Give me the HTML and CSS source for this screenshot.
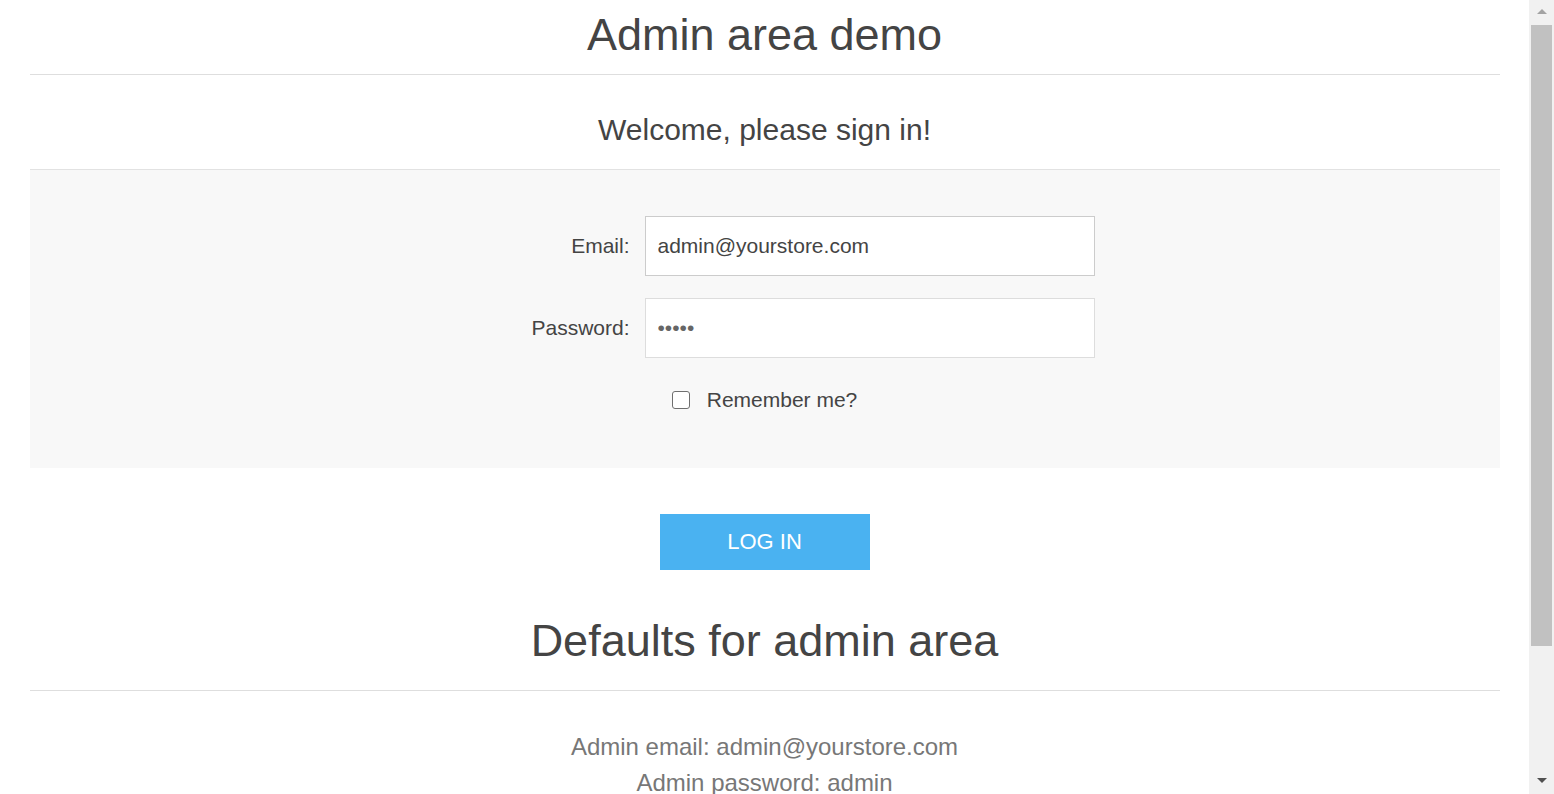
FILE: index.html
```html
<!DOCTYPE html>
<html lang="en">
<head>
<meta charset="utf-8">
<title>Admin area demo</title>
<link rel="stylesheet" href="styles.css">
</head>
<body>
<div class="window">
  <main class="page">
    <div class="container">
      <h1 class="page-title">Admin area demo</h1>
      <h2 class="welcome">Welcome, please sign in!</h2>
      <form class="login-form">
        <div class="form-panel">
          <div class="form-row">
            <label class="form-label" for="email">Email:</label>
            <input class="form-input form-input--active" id="email" type="text" value="admin@yourstore.com" autofocus>
          </div>
          <div class="form-row">
            <label class="form-label" for="password">Password:</label>
            <input class="form-input form-input--password" id="password" type="password" value="admin">
          </div>
          <div class="remember-row">
            <input class="checkbox" id="remember" type="checkbox">
            <label class="remember-label" for="remember">Remember me?</label>
          </div>
        </div>
        <div class="button-row">
          <button class="login-button" type="button">LOG IN</button>
        </div>
      </form>
      <h1 class="defaults-title">Defaults for admin area</h1>
      <div class="defaults-text">
        <p>Admin email: admin@yourstore.com</p>
        <p>Admin password: admin</p>
      </div>
    </div>
  </main>
  <div class="scrollbar" aria-hidden="true">
    <div class="scroll-btn scroll-btn--up"><span class="arrow-up"></span></div>
    <div class="scroll-thumb"></div>
    <div class="scroll-rest"></div>
    <div class="scroll-btn scroll-btn--down"><span class="arrow-down"></span></div>
  </div>
</div>
</body>
</html>
```

FILE: styles.css
```css
html, body {
  margin: 0;
  padding: 0;
  height: 100%;
  overflow: hidden;
  background: #fff;
}

body {
  font-family: "Liberation Sans", Arial, sans-serif;
  color: #444;
}

.window {
  display: flex;
  height: 794px;
}

.page {
  flex: 1;
  overflow: hidden;
}

.container {
  width: 1470px;
  margin: 0 auto;
  text-align: center;
}

.page-title {
  margin: 0;
  padding: 5px 0 9px;
  font-size: 45px;
  line-height: 60px;
  font-weight: normal;
  border-bottom: 1px solid #dedede;
}

.welcome {
  margin: 0;
  padding: 35px 0 19px;
  font-size: 30px;
  line-height: 40px;
  font-weight: normal;
  border-bottom: 1px solid #e2e2e2;
}

.form-panel {
  background: #f8f8f8;
  padding: 46px 0 56px;
  display: flex;
  flex-direction: column;
  align-items: center;
  gap: 22px;
}

.form-row {
  display: grid;
  grid-template-columns: 195px 450px;
  column-gap: 15px;
  align-items: center;
}

.form-label {
  text-align: right;
  font-size: 21px;
  color: #444;
}

.form-input {
  box-sizing: border-box;
  height: 60px;
  width: 450px;
  padding: 0 12px;
  border: 1px solid #dddddd;
  background: #fff;
  font-family: "Liberation Sans", Arial, sans-serif;
  font-size: 21px;
  color: #444;
  outline: none;
  border-radius: 0;
  caret-color: #444;
}

.form-input--active,
.form-input--active:focus {
  border-color: #cccccc;
}

.form-input--password {
  color: #666;
}

.remember-row {
  display: flex;
  align-items: center;
  gap: 17px;
  height: 24px;
  margin-top: 8px;
}

.checkbox {
  appearance: none;
  -webkit-appearance: none;
  width: 18px;
  height: 18px;
  margin: 0;
  border: 1px solid #6f6f6f;
  border-radius: 3px;
  background: #fff;
  box-sizing: border-box;
}

.remember-label {
  font-size: 21px;
  color: #444;
}

.button-row {
  padding-top: 46px;
}

.login-button {
  width: 210px;
  height: 56px;
  border: 0;
  background: #4ab2f1;
  color: #fff;
  font-family: "Liberation Sans", Arial, sans-serif;
  font-size: 22px;
  padding: 0;
  border-radius: 0;
}

.defaults-title {
  margin: 41px 0 0;
  padding: 0 0 19px;
  font-size: 45px;
  line-height: 60px;
  font-weight: normal;
  border-bottom: 1px solid #dedede;
}

.defaults-text {
  padding-top: 38px;
  color: #777;
  font-size: 24px;
  line-height: 36px;
}

.defaults-text p {
  margin: 0;
}

/* fake browser scrollbar */
.scrollbar {
  width: 25px;
  flex: none;
  background: #f1f1f1;
  display: flex;
  flex-direction: column;
  align-items: center;
}

.scroll-btn {
  height: 25px;
  width: 100%;
  display: flex;
  align-items: center;
  justify-content: center;
  flex: none;
}

.scroll-btn--down {
  height: 27px;
}

.arrow-up {
  width: 0;
  height: 0;
  border-left: 5px solid transparent;
  border-right: 5px solid transparent;
  border-bottom: 5px solid #a3a3a3;
  margin-top: -2px;
}

.arrow-down {
  width: 0;
  height: 0;
  border-left: 5px solid transparent;
  border-right: 5px solid transparent;
  border-top: 5px solid #505050;
}

.scroll-thumb {
  width: 21px;
  height: 621px;
  background: #c1c1c1;
  flex: none;
}

.scroll-rest {
  flex: 1;
}
```
